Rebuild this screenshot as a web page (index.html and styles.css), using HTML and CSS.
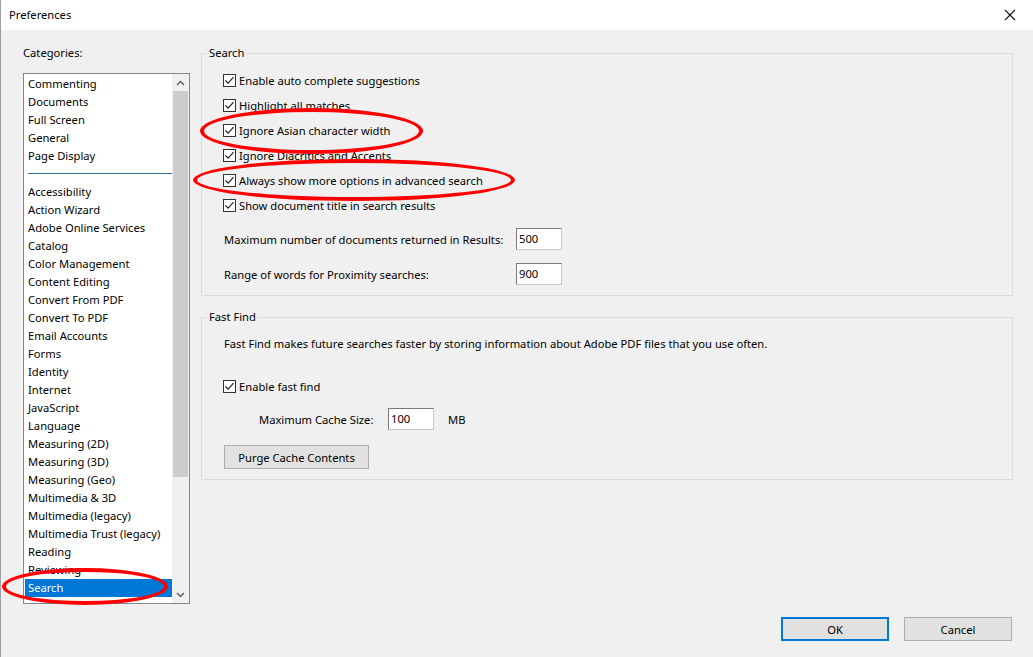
FILE: index.html
```html
<!DOCTYPE html>
<html lang="en">
<head>
    <meta charset="UTF-8">
    <title>Preferences</title>
    <link rel="stylesheet" href="styles.css">
</head>
<body>
    <div class="window">
        <div class="titlebar">
            <span class="title">Preferences</span>
            <svg class="close" width="12" height="12" viewBox="0 0 12 12">
                <path d="M1 1 L11 11 M11 1 L1 11" stroke="#111" stroke-width="1.1" fill="none"/>
            </svg>
        </div>

        <div class="main">
            <div class="sidebar">
                <div class="cat-label">Categories:</div>
                <div class="listbox">
                    <ul class="items">
                        <li>Commenting</li>
                        <li>Documents</li>
                        <li>Full Screen</li>
                        <li>General</li>
                        <li>Page Display</li>
                        <li class="sep"></li>
                        <li>Accessibility</li>
                        <li>Action Wizard</li>
                        <li>Adobe Online Services</li>
                        <li>Catalog</li>
                        <li>Color Management</li>
                        <li>Content Editing</li>
                        <li>Convert From PDF</li>
                        <li>Convert To PDF</li>
                        <li>Email Accounts</li>
                        <li>Forms</li>
                        <li>Identity</li>
                        <li>Internet</li>
                        <li>JavaScript</li>
                        <li>Language</li>
                        <li>Measuring (2D)</li>
                        <li>Measuring (3D)</li>
                        <li>Measuring (Geo)</li>
                        <li>Multimedia &amp; 3D</li>
                        <li>Multimedia (legacy)</li>
                        <li>Multimedia Trust (legacy)</li>
                        <li>Reading</li>
                        <li>Reviewing</li>
                        <li class="selected">Search</li>
                    </ul>
                    <div class="scrollbar">
                        <div class="arrow">
                            <svg width="9" height="6" viewBox="0 0 9 6"><path d="M1 5 L4.5 1.5 L8 5" stroke="#606060" stroke-width="1.5" fill="none"/></svg>
                        </div>
                        <div class="thumb"></div>
                        <div class="track"></div>
                        <div class="arrow">
                            <svg width="9" height="6" viewBox="0 0 9 6"><path d="M1 1 L4.5 4.5 L8 1" stroke="#606060" stroke-width="1.5" fill="none"/></svg>
                        </div>
                    </div>
                </div>
            </div>

            <div class="content">
                <fieldset class="group search-group">
                    <legend>Search</legend>
                    <div class="checks">
                        <label class="check"><span class="box"></span>Enable auto complete suggestions</label>
                        <label class="check"><span class="box"></span>Highlight all matches</label>
                        <label class="check"><span class="box"></span>Ignore Asian character width</label>
                        <label class="check"><span class="box"></span>Ignore Diacritics and Accents</label>
                        <label class="check"><span class="box"></span>Always show more options in advanced search</label>
                        <label class="check"><span class="box"></span>Show document title in search results</label>
                    </div>
                    <div class="fields">
                        <span>Maximum number of documents returned in Results:</span>
                        <span class="input">500</span>
                        <span>Range of words for Proximity searches:</span>
                        <span class="input">900</span>
                    </div>
                </fieldset>

                <fieldset class="group fast-group">
                    <legend>Fast Find</legend>
                    <p class="desc">Fast Find makes future searches faster by storing information about Adobe PDF files that you use often.</p>
                    <label class="check"><span class="box"></span>Enable fast find</label>
                    <div class="cache-row">
                        <span class="cache-label">Maximum Cache Size:</span>
                        <span class="input">100</span>
                        <span class="unit">MB</span>
                    </div>
                    <button class="btn purge">Purge Cache Contents</button>
                </fieldset>
            </div>
        </div>

        <div class="footer">
            <button class="btn ok">OK</button>
            <button class="btn">Cancel</button>
        </div>

        <!-- red annotation marks -->
        <div class="mark mark-asian"></div>
        <div class="mark mark-always"></div>
        <div class="mark mark-search"></div>
    </div>
</body>
</html>
```

FILE: styles.css
```css
body {
    margin: 0;
    background-color: #f0f0f0;
    font-family: "Noto Sans", "Open Sans", sans-serif;
    font-size: 11.2px;
    color: #000;
}

.window {
    position: relative;
    width: 1033px;
    height: 657px;
    overflow: hidden;
    box-sizing: border-box;
    border-left: 1px solid #a0a0a0;
}

.titlebar {
    height: 30px;
    background-color: #fff;
    display: flex;
    align-items: center;
    justify-content: space-between;
    padding: 0 17px 0 8px;
}

.title {
    padding-bottom: 2px;
}

.main {
    display: flex;
    gap: 11px;
    padding: 15px 20px 0 22px;
}

.sidebar {
    width: 167px;
    flex-shrink: 0;
}

.cat-label {
    line-height: 16px;
    margin-bottom: 12px;
}

.listbox {
    display: flex;
    height: 531px;
    box-sizing: border-box;
    border: 1px solid #828790;
    background-color: #fff;
}

.items {
    list-style: none;
    margin: 0;
    padding: 1px 0 0 1px;
    flex: 1;
    overflow: hidden;
}

.items li {
    height: 18px;
    line-height: 18px;
    padding-left: 3px;
    white-space: nowrap;
}

.items li.sep {
    position: relative;
}

.items li.sep::after {
    content: "";
    position: absolute;
    left: 3px;
    right: 0;
    top: 8px;
    border-top: 1px solid #2f6e9e;
}

.items li.selected {
    background-color: #0078d7;
    color: #fff;
}

.scrollbar {
    width: 17px;
    display: flex;
    flex-direction: column;
    background-color: #f0f0f0;
}

.arrow {
    height: 17px;
    display: flex;
    align-items: center;
    justify-content: center;
}

.thumb {
    height: 386px;
    margin: 0 1px;
    background-color: #cdcdcd;
}

.track {
    flex: 1;
}

.content {
    width: 812px;
    display: flex;
    flex-direction: column;
    gap: 13px;
}

.group {
    margin: 0;
    padding: 0 0 10px 21px;
    border: 1px solid #dcdcdc;
    min-width: 0;
}

.group legend {
    padding: 0 2px;
    margin-left: -16px;
    line-height: 16px;
}

.search-group {
    padding-top: 7px;
}

.checks {
    display: flex;
    flex-direction: column;
}

.check {
    height: 25px;
    display: flex;
    align-items: center;
    gap: 3px;
    white-space: nowrap;
}

.box {
    width: 11px;
    height: 11px;
    border: 1px solid #333;
    background: #fff url("data:image/svg+xml,%3Csvg xmlns='http://www.w3.org/2000/svg' width='11' height='11' viewBox='0 0 11 11'%3E%3Cpath d='M1.5 5.5 L4.2 8.2 L9.5 2.2' stroke='%23222' stroke-width='1.2' fill='none'/%3E%3C/svg%3E") no-repeat center;
}

.fields {
    display: grid;
    grid-template-columns: 292px 46px;
    row-gap: 13px;
    align-items: center;
    margin-top: 10px;
    padding-left: 1px;
    white-space: nowrap;
}

.input {
    height: 22px;
    box-sizing: border-box;
    border: 1px solid #c8c8c8;
    border-top-color: #7a7a7a;
    border-left-color: #7a7a7a;
    background-color: #fff;
    padding: 1px 0 0 2px;
    line-height: 18px;
}

.fast-group {
    padding-top: 11px;
}

.desc {
    margin: 0 0 22px 1px;
    line-height: 16px;
}

.cache-row {
    display: flex;
    align-items: center;
    margin: 9px 0 15px 36px;
}

.cache-label {
    width: 129px;
}

.cache-row .input {
    width: 46px;
}

.unit {
    margin-left: 14px;
}

.btn {
    font: inherit;
    color: #000;
    height: 24px;
    background-color: #e1e1e1;
    border: 1px solid #adadad;
    padding: 0;
}

.purge {
    width: 145px;
    margin-left: 1px;
}

.footer {
    display: flex;
    justify-content: flex-end;
    gap: 15px;
    padding: 0 21px 0 0;
    margin-top: 13px;
}

.footer .btn {
    width: 108px;
}

.footer .ok {
    border: 2px solid #0078d7;
}

.mark {
    position: absolute;
    border: 4px solid #f00;
    border-radius: 50%;
    box-sizing: border-box;
}

.mark-asian {
    left: 199px;
    top: 108px;
    width: 223px;
    height: 46px;
}

.mark-always {
    left: 192px;
    top: 159px;
    width: 322px;
    height: 42px;
}

.mark-search {
    left: 1px;
    top: 568px;
    width: 166px;
    height: 37px;
}
```
